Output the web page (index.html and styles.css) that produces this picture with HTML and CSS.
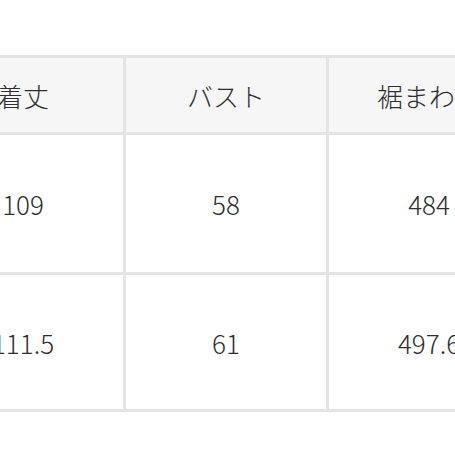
FILE: index.html
```html
<!DOCTYPE html>
<html lang="ja">
<head>
<meta charset="utf-8">
<link rel="stylesheet" href="styles.css">
</head>
<body>
<div class="frame">
  <div class="size-table">
    <div class="cell head">着丈</div>
    <div class="cell head">バスト</div>
    <div class="cell head">裾まわり</div>
    <div class="cell">109</div>
    <div class="cell">58</div>
    <div class="cell">484</div>
    <div class="cell">111.5</div>
    <div class="cell">61</div>
    <div class="cell">497.6</div>
  </div>
</div>
</body>
</html>
```
FILE: styles.css
```css
html, body {
  margin: 0;
  padding: 0;
  background: #fff;
  overflow: hidden;
}
.frame {
  width: 455px;
  height: 455px;
  overflow: hidden;
  padding-top: 55px;
  box-sizing: border-box;
}
.size-table {
  display: grid;
  grid-template-columns: 200px 200px 200px;
  grid-template-rows: 74px 137px 134px;
  gap: 3px;
  padding: 3px;
  background: #e4e4e4;
  width: max-content;
  margin-left: -80px;
  font-family: "Noto Sans CJK JP", "Noto Sans", sans-serif;
  font-size: 26px;
  font-weight: 300;
  color: #2e2e2e;
}
.cell {
  background: #fff;
  display: flex;
  align-items: center;
  justify-content: center;
  white-space: nowrap;
}
.cell.head {
  background: #f6f6f6;
}
```
